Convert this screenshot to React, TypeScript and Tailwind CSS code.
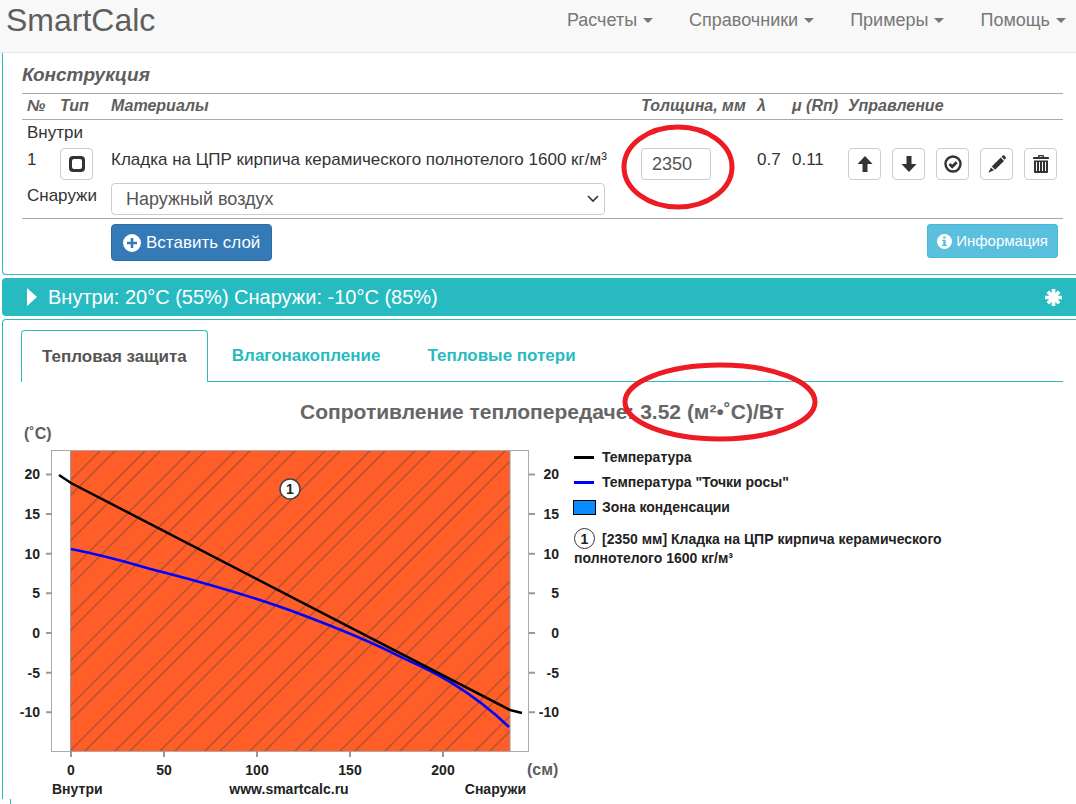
import React from 'react';

const navItems = ['Расчеты', 'Справочники', 'Примеры', 'Помощь'];

const icons = {
  square: <path fillRule="evenodd" d="M5 1h8a4 4 0 0 1 4 4v8a4 4 0 0 1-4 4H5a4 4 0 0 1-4-4V5a4 4 0 0 1 4-4zm1 3a2 2 0 0 0-2 2v6a2 2 0 0 0 2 2h6a2 2 0 0 0 2-2V6a2 2 0 0 0-2-2z" />,
  up: <path d="M9 1l7.500 8h-5v8h-5V9h-5z" />,
  down: <path d="M9 17l7.500-8h-5V1h-5v8h-5z" />,
  check: (
    <>
      <circle cx="9" cy="9" r="7.500" fill="none" stroke="currentColor" strokeWidth="2.400" />
      <path d="M5.500 9l2.700 2.700 4.500-4.500" fill="none" stroke="currentColor" strokeWidth="2.800" />
    </>
  ),
  pencil: (
    <>
      <path d="M13.500 1.800l1.200-1.200q.8-.8 1.600 0l1.400 1.400q.7.800 0 1.500l-1.200 1.200z" />
      <path d="M12.700 2.600l3.300 3.300-8.900 8.900-3.300-3.300z" />
      <path d="M3 12.400l2.900 2.900L.3 17.800z" />
    </>
  ),
  trash: (
    <>
      <path d="M1 4V3q0-1 1-1h4V1q0-1 1-1h4q1 0 1 1v1h4q1 0 1 1v1zM7.500 1.200V2h3v-.8z" fillRule="evenodd" />
      <path d="M2 5.500h14V17q0 1-1 1H3q-1 0-1-1zm2 1.500v9h1V7zm3 0v9h1V7zm3 0v9h1V7zm3 0v9h1V7z" fillRule="evenodd" />
    </>
  ),
  plus: <path fillRule="evenodd" d="M9 0a9 9 0 1 0 0 18A9 9 0 0 0 9 0zM7.700 4h2.600v3.700H14v2.600h-3.700V14H7.700v-3.700H4V7.700h3.700z" />,
  info: <path fillRule="evenodd" d="M9 0a9 9 0 1 0 0 18A9 9 0 0 0 9 0zM7.500 3h3v2.500h-3zM6 7h4.500v6H12v1.500H6V13h1.500V8.500H6z" />,
  asterisk: (
    <path d="M9 0v18M0 9h18M3 3l12 12M15 3L3 15" fill="none" stroke="currentColor" strokeWidth="3.800" />
  ),
};

type IconName = keyof typeof icons;

const Icon = ({ name, className = 'w-[18px] h-[18px]' }: { name: IconName; className?: string }) => (
  <svg viewBox="0 0 18 18" fill="currentColor" className={`shrink-0 ${className}`} aria-hidden="true">
    {icons[name]}
  </svg>
);

const IconButton = ({ name, label }: { name: IconName; label: string }) => (
  <button
    type="button"
    aria-label={label}
    className="flex h-8 w-[33px] items-center justify-center rounded border border-[#ccc] bg-white text-[#333]"
  >
    <Icon name={name} />
  </button>
);

const Header = () => (
  <header className="flex h-[53px] items-start justify-between border-b border-[#e7e7e7] bg-[#f8f8f8] pl-[6px] pr-[10px]">
    <a href="#" className="text-[32px] leading-10 text-[#5e5e5e]">SmartCalc</a>
    <nav className="flex gap-9 text-lg leading-10 text-[#777]">
      {navItems.map((item) => (
        <a key={item} href="#" className="flex items-center gap-[6px]">
          {item}
          <svg viewBox="0 0 10 5" className="mt-px h-[5px] w-[10px]" fill="currentColor" aria-hidden="true">
            <path d="M0 0h10L5 5z" />
          </svg>
        </a>
      ))}
    </nav>
  </header>
);

const Construction = () => (
  <section className="ml-[2px] rounded-bl border-b border-l border-[#27bbc1] pb-[13px] pl-[19px] pr-[13px] pt-[9px]">
    <h2 className="mb-[6px] text-[19px] font-bold italic leading-[25px] text-[#5e5e5e]">Конструкция</h2>
    <table className="w-full table-fixed border-b border-[#aaa] text-left text-[17px] leading-6 text-[#333]">
      <colgroup>
        <col className="w-[33px]" />
        <col className="w-[51px]" />
        <col />
        <col className="w-[116px]" />
        <col className="w-[35px]" />
        <col className="w-[56px]" />
        <col className="w-[220px]" />
      </colgroup>
      <thead>
        <tr className="whitespace-nowrap border-y border-[#aaa] text-base italic leading-6 text-[#5e5e5e]">
          <th className="pb-px pl-[5px]">№</th>
          <th className="pb-px pl-[5px]">Тип</th>
          <th className="pb-px pl-[5px]">Материалы</th>
          <th className="pb-px pl-[5px]">Толщина, мм</th>
          <th className="pb-px pl-[5px]">λ</th>
          <th className="pb-px pl-[5px]">μ (Rп)</th>
          <th className="pb-px pl-[5px]">Управление</th>
        </tr>
      </thead>
      <tbody className="align-top">
        <tr>
          <td colSpan={7} className="pb-[3px] pl-[5px] pt-px">Внутри</td>
        </tr>
        <tr className="whitespace-nowrap">
          <td className="pl-[5px]">1</td>
          <td className="pb-[3px] pl-[5px]">
            <IconButton name="square" label="Тип слоя" />
          </td>
          <td className="pl-[5px]">Кладка на ЦПР кирпича керамического полнотелого 1600 кг/м³</td>
          <td className="relative pl-[5px]">
            <input
              type="text"
              aria-label="Толщина, мм"
              defaultValue="2350"
              className="block h-8 w-[70px] rounded border border-[#ccc] pl-[10px] text-lg text-[#555]"
            />
            <svg viewBox="0 0 114 86" className="pointer-events-none absolute -left-[15px] -top-6 h-[86px] w-[114px]" aria-hidden="true">
              <ellipse cx="57" cy="43" rx="54" ry="40" fill="none" stroke="#ed1c24" strokeWidth="5" />
            </svg>
          </td>
          <td className="pl-[5px]">0.7</td>
          <td className="pl-[5px]">0.11</td>
          <td className="pl-[5px]">
            <div className="flex gap-[11px]">
              <IconButton name="up" label="Вверх" />
              <IconButton name="down" label="Вниз" />
              <IconButton name="check" label="Включить" />
              <IconButton name="pencil" label="Изменить" />
              <IconButton name="trash" label="Удалить" />
            </div>
          </td>
        </tr>
        <tr>
          <td colSpan={2} className="pl-[5px] pt-px">
            <label htmlFor="outside">Снаружи</label>
          </td>
          <td colSpan={5} className="pb-[3px] pl-[5px]">
            <div className="relative w-[494px]">
              <select
                id="outside"
                className="block h-8 w-full appearance-none rounded border border-[#ccc] bg-white pl-[14px] text-lg leading-6 text-[#555]"
              >
                <option>Наружный воздух</option>
              </select>
              <svg viewBox="0 0 12 8" className="pointer-events-none absolute right-[6px] top-3 h-2 w-3" aria-hidden="true">
                <path d="M1 1l5 5 5-5" fill="none" stroke="#333" strokeWidth="1.600" />
              </svg>
            </div>
          </td>
        </tr>
      </tbody>
    </table>
    <div className="flex items-start justify-between pl-[89px] pr-[5px] pt-[5px]">
      <button type="button" className="flex h-[37px] items-center gap-[5px] rounded border border-[#2e6da4] bg-[#337ab7] px-[11px] text-[17px] text-white">
        <Icon name="plus" />
        Вставить слой
      </button>
      <button type="button" className="flex h-[34px] items-center gap-1 rounded-[3px] border border-[#46b8da] bg-[#5bc0de] px-[9px] text-[15px] text-white">
        <Icon name="info" className="h-[15px] w-[15px]" />
        Информация
      </button>
    </div>
  </section>
);

// plot area in svg units
const plot = { left: 50, top: 30, right: 489, bottom: 330 };
const xCm = (cm: number) => plot.left + cm * 1.86;
const yTemp = (t: number) => 212 - t * 7.93;

const temps = [20, 15, 10, 5, 0, -5, -10];
const depths = [0, 50, 100, 150, 200];
const hatch = Array.from({ length: 16 }, (_, i) => 109 + i * 45).flatMap((c) => [c, c + 15]);

const Chart = () => (
  <svg
    viewBox="0 0 540 378"
    className="block h-[378px] w-[540px] shrink-0 overflow-visible font-bold"
    role="img"
    aria-label="График температуры"
    fontSize="14"
    fill="#222"
  >
    <clipPath id="layer">
      <rect x={plot.left} y={plot.top} width={439} height={300} />
    </clipPath>
    <rect x="30.500" y="29.500" width="477" height="301" fill="#fff" stroke="#aaa" />
    <rect x={plot.left} y={plot.top} width={439} height={300} fill="#ff5e28" />
    <g clipPath="url(#layer)" stroke="#b84f2e" strokeWidth="1.500">
      {hatch.map((c) => (
        <line key={c} x1={c - plot.top} y1={plot.top} x2={c - plot.bottom} y2={plot.bottom} />
      ))}
    </g>
    <path d="M49.500 30v300M489 30v300" stroke="#999" strokeWidth="1" />

    {temps.map((t) => (
      <g key={t}>
        <path d={`M25 ${yTemp(t)}h6M508 ${yTemp(t)}h6`} stroke="#999" strokeWidth="2" />
        <text x="19" y={yTemp(t) + 5} textAnchor="end">{t}</text>
        <text x="538" y={yTemp(t) + 5} textAnchor="end">{t}</text>
      </g>
    ))}
    {depths.map((d) => (
      <g key={d}>
        <path d={`M${xCm(d)} 330v6`} stroke="#999" strokeWidth="2" />
        <text x={xCm(d)} y="354" textAnchor="middle">{d}</text>
      </g>
    ))}

    <path d="M50 128C80 134 95 138 119 145S210 167 279 193S370 231 382 237S440 260 488 306" fill="none" stroke="#00f" strokeWidth="2.500" />
    <path d="M38 54L50 62L489 289L501 292" fill="none" stroke="#000" strokeWidth="2.500" />

    <circle cx="269" cy="68" r="10" fill="#fff" stroke="#444" strokeWidth="1.500" />
    <text x="269" y="73" textAnchor="middle">1</text>

    <text x="3" y="18" fontSize="16" fill="#5e5e5e">(˚C)</text>
    <text x="506" y="354" fontSize="16" fill="#5e5e5e">(см)</text>
    <text x="31" y="373">Внутри</text>
    <text x="268" y="373" textAnchor="middle">www.smartcalc.ru</text>
    <text x="505" y="373" textAnchor="end">Снаружи</text>
  </svg>
);

const Legend = () => (
  <ul className="mt-6 w-[390px] text-sm font-bold leading-[25px] text-[#222]">
    <li className="flex items-center gap-2">
      <span className="h-[3px] w-5 bg-black" />
      Температура
    </li>
    <li className="flex items-center gap-2">
      <span className="h-[3px] w-5 bg-[#00f]" />
      Температура "Точки росы"
    </li>
    <li className="flex items-center gap-[6px]">
      <span className="-ml-px h-[15px] w-[23px] border border-black bg-[#0a8bff]" />
      Зона конденсации
    </li>
    <li className="mt-2 leading-[19px]">
      <span className="mr-[7px] inline-flex h-[21px] w-[21px] items-center justify-center rounded-full border border-[#333] leading-none">1</span>
      [2350 мм] Кладка на ЦПР кирпича керамического полнотелого 1600 кг/м³
    </li>
  </ul>
);

const Results = () => (
  <section className="ml-[2px] mt-[3px] rounded-tl border-l border-t border-[#27bbc1] pl-[18px] pt-[10px]">
    <div role="tablist" className="mr-[13px] flex border-b border-[#27bbc1] text-[17px] font-bold text-[#27bbc1]">
      <button type="button" role="tab" aria-selected="true" className="-mb-px h-[52px] rounded-t border border-b-0 border-[#27bbc1] bg-white px-5 text-[#555]">
        Тепловая защита
      </button>
      <button type="button" role="tab" aria-selected="false" className="px-6">Влагонакопление</button>
      <button type="button" role="tab" aria-selected="false" className="px-6 -ml-px">Тепловые потери</button>
    </div>
    <h3 className="mr-[13px] mt-4 text-center text-[21px] font-bold leading-7 text-[#666]">
      Сопротивление теплопередаче:{' '}
      <span className="relative inline-block">
        3.52 (м²•˚C)/Вт
        <svg viewBox="0 0 196 80" className="pointer-events-none absolute -left-[18px] -top-9 h-20 w-[196px]" aria-hidden="true">
          <ellipse cx="98" cy="40" rx="95" ry="37" fill="none" stroke="#ed1c24" strokeWidth="5" />
        </svg>
      </span>
    </h3>
    <div className="-mt-[5px] flex gap-[13px]">
      <Chart />
      <Legend />
    </div>
  </section>
);

const App = () => (
  <div className="overflow-hidden bg-white font-['Liberation_Sans',Arial,sans-serif]">
    <Header />
    <Construction />
    <button type="button" className="ml-[2px] mt-[3px] flex h-[38px] w-[calc(100%-2px)] items-center rounded-l bg-[#27bbc1] pl-[25px] pr-[14px] text-xl text-white">
      <svg viewBox="0 0 10 18" className="mr-[11px] h-[18px] w-[10px]" fill="currentColor" aria-hidden="true">
        <path d="M0 0l10 9-10 9z" />
      </svg>
      Внутри: 20°C (55%) Снаружи: -10°C (85%)
      <Icon name="asterisk" className="ml-auto h-[17px] w-[17px]" />
    </button>
    <Results />
    <div className="ml-[10px] h-[5px] border-l border-[#27bbc1]" />
  </div>
);

export default App;
